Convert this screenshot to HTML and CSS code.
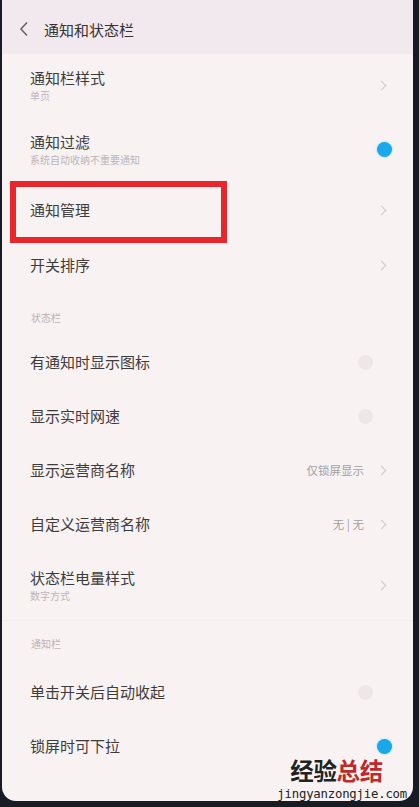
FILE: index.html
```html
<!DOCTYPE html>
<html>
<head>
  <title>通知和状态栏</title>
  <link rel="stylesheet" href="styles.css">
</head>
<body>
  <div class="screen">
    <div class="header">
      <svg class="back" width="10" height="16" viewBox="0 0 10 16"><path d="M8 1.5 L2 8 L8 14.5" fill="none" stroke="#6b6668" stroke-width="1.6"/></svg>
      <span class="title">通知和状态栏</span>
    </div>

    <div class="row row-sub r1">
      <div class="text"><div class="label">通知栏样式</div><div class="sub">单页</div></div>
      <span class="chev"></span>
    </div>
    <div class="row row-sub r2">
      <div class="text"><div class="label">通知过滤</div><div class="sub">系统自动收纳不重要通知</div></div>
      <span class="dot on"></span>
    </div>
    <div class="row r3">
      <div class="text"><div class="label">通知管理</div></div>
      <span class="chev"></span>
    </div>
    <div class="row">
      <div class="text"><div class="label">开关排序</div></div>
      <span class="chev"></span>
    </div>

    <div class="section">状态栏</div>
    <div class="row">
      <div class="text"><div class="label">有通知时显示图标</div></div>
      <span class="dot off"></span>
    </div>
    <div class="row">
      <div class="text"><div class="label">显示实时网速</div></div>
      <span class="dot off"></span>
    </div>
    <div class="row">
      <div class="text"><div class="label">显示运营商名称</div></div>
      <span class="value">仅锁屏显示</span>
      <span class="chev"></span>
    </div>
    <div class="row">
      <div class="text"><div class="label">自定义运营商名称</div></div>
      <span class="value">无 | 无</span>
      <span class="chev"></span>
    </div>
    <div class="row row-sub r9">
      <div class="text"><div class="label">状态栏电量样式</div><div class="sub">数字方式</div></div>
      <span class="chev"></span>
    </div>

    <div class="section s2">通知栏</div>
    <div class="row">
      <div class="text"><div class="label">单击开关后自动收起</div></div>
      <span class="dot off"></span>
    </div>
    <div class="row">
      <div class="text"><div class="label">锁屏时可下拉</div></div>
      <span class="dot on"></span>
    </div>

    <div class="highlight"></div>
    <div class="watermark">
      <div class="wm-cn"><span class="wm-dark">经验</span><span class="wm-red">总结</span></div>
      <div class="wm-url">jingyanzongjie.com</div>
    </div>
  </div>
</body>
</html>
```

FILE: styles.css
```css
html, body {
  margin: 0;
  padding: 0;
  background-color: #181a24;
  height: 807px;
  overflow: hidden;
}

body {
  font-family: "Noto Sans CJK SC", "Noto Sans", sans-serif;
}

.screen {
  position: relative;
  margin-left: 2px;
  width: 411px;
  height: 801px;
  background-color: #f8f2f3;
  border-radius: 0 0 14px 14px;
  overflow: hidden;
}

.header {
  height: 54px;
  display: flex;
  align-items: center;
  background-color: #f2e9ee;
  padding-left: 17px;
  padding-top: 4px;
  box-sizing: border-box;
}

.back {
  margin-right: 15px;
}

.title {
  font-size: 15px;
  color: #333;
}

.row {
  height: 54px;
  display: flex;
  align-items: center;
  padding: 0 22px 0 28px;
}

.row-sub { height: 63px; }
.r2 { height: 65px; }
.r3 { height: 56px; }
.r9 { height: 69px; }

.text {
  flex: 1;
}

.label {
  font-size: 15px;
  line-height: 20px;
  color: #3e3b3c;
}

.sub {
  font-size: 10px;
  line-height: 14px;
  color: #bdb5b9;
  margin-top: 1px;
}

.value {
  font-size: 11.5px;
  color: #a59fa1;
  margin-right: 14px;
}

.chev {
  width: 6px;
  height: 6px;
  border-top: 1.3px solid #cfc8cb;
  border-right: 1.3px solid #cfc8cb;
  transform: rotate(45deg);
  margin-right: 6px;
}

.dot {
  width: 15px;
  height: 15px;
  border-radius: 50%;
}

.dot.on {
  background-color: #1aa8ec;
  box-shadow: 0 0 2px #7fd0f5;
  margin-right: -1px;
}

.dot.off {
  background-color: #eee6e9;
  margin-right: 18px;
}

.section {
  height: 43px;
  box-sizing: border-box;
  padding: 20px 0 0 29px;
  font-size: 10px;
  line-height: 12px;
  color: #bbb3b7;
}

.s2 {
  height: 45px;
  padding-top: 17px;
  border-top: 1px solid #f1eaed;
}

.highlight {
  position: absolute;
  left: 8px;
  top: 181px;
  width: 205px;
  height: 50px;
  border: 6px solid #e8262b;
}

.watermark {
  position: absolute;
  right: 6px;
  top: 753px;
  text-align: right;
}

.wm-cn {
  font-size: 23.5px;
  line-height: 34px;
  font-weight: bold;
  letter-spacing: -0.3px;
  margin-right: 24px;
  text-shadow: 0 0 2px #fff;
}

.wm-dark { color: #222; }
.wm-red { color: #c0282c; }

.wm-url {
  font-family: "DejaVu Sans Mono", monospace;
  font-size: 12.3px;
  line-height: 14px;
  color: #222;
  letter-spacing: -0.2px;
}
```
